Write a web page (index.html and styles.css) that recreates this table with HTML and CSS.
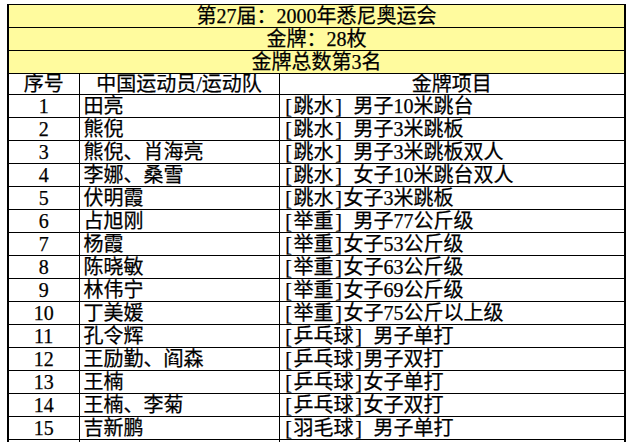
FILE: index.html
```html
<!DOCTYPE html>
<html lang="zh-CN">
<head>
<meta charset="utf-8">
<title>第27届：2000年悉尼奥运会</title>
<link rel="stylesheet" href="styles.css">
</head>
<body>
<table class="medals">
  <colgroup>
    <col class="c-no">
    <col class="c-name">
    <col class="c-event">
  </colgroup>
  <tbody>
    <tr class="title"><td colspan="3">第27届：2000年悉尼奥运会</td></tr>
    <tr class="title"><td colspan="3">金牌：28枚</td></tr>
    <tr class="title"><td colspan="3">金牌总数第3名</td></tr>
    <tr class="head"><td>序号</td><td>中国运动员/运动队</td><td>金牌项目</td></tr>
    <tr><td class="no">1</td><td class="txt">田亮</td><td class="txt"><span class="br">[</span>跳水<span class="br">]</span>&ensp;男子10米跳台</td></tr>
    <tr><td class="no">2</td><td class="txt">熊倪</td><td class="txt"><span class="br">[</span>跳水<span class="br">]</span>&ensp;男子3米跳板</td></tr>
    <tr><td class="no">3</td><td class="txt">熊倪、肖海亮</td><td class="txt"><span class="br">[</span>跳水<span class="br">]</span>&ensp;男子3米跳板双人</td></tr>
    <tr><td class="no">4</td><td class="txt">李娜、桑雪</td><td class="txt"><span class="br">[</span>跳水<span class="br">]</span>&ensp;女子10米跳台双人</td></tr>
    <tr><td class="no">5</td><td class="txt">伏明霞</td><td class="txt"><span class="br">[</span>跳水<span class="br">]</span>女子3米跳板</td></tr>
    <tr><td class="no">6</td><td class="txt">占旭刚</td><td class="txt"><span class="br">[</span>举重<span class="br">]</span>&ensp;男子77公斤级</td></tr>
    <tr><td class="no">7</td><td class="txt">杨霞</td><td class="txt"><span class="br">[</span>举重<span class="br">]</span>女子53公斤级</td></tr>
    <tr><td class="no">8</td><td class="txt">陈晓敏</td><td class="txt"><span class="br">[</span>举重<span class="br">]</span>女子63公斤级</td></tr>
    <tr><td class="no">9</td><td class="txt">林伟宁</td><td class="txt"><span class="br">[</span>举重<span class="br">]</span>女子69公斤级</td></tr>
    <tr><td class="no">10</td><td class="txt">丁美媛</td><td class="txt"><span class="br">[</span>举重<span class="br">]</span>女子75公斤以上级</td></tr>
    <tr><td class="no">11</td><td class="txt">孔令辉</td><td class="txt"><span class="br">[</span>乒乓球<span class="br">]</span>&ensp;男子单打</td></tr>
    <tr><td class="no">12</td><td class="txt">王励勤、阎森</td><td class="txt"><span class="br">[</span>乒乓球<span class="br">]</span>男子双打</td></tr>
    <tr><td class="no">13</td><td class="txt">王楠</td><td class="txt"><span class="br">[</span>乒乓球<span class="br">]</span>女子单打</td></tr>
    <tr><td class="no">14</td><td class="txt">王楠、李菊</td><td class="txt"><span class="br">[</span>乒乓球<span class="br">]</span>女子双打</td></tr>
    <tr><td class="no">15</td><td class="txt">吉新鹏</td><td class="txt"><span class="br">[</span>羽毛球<span class="br">]</span>&ensp;男子单打</td></tr>
    <tr class="more"><td></td><td></td><td></td></tr>
  </tbody>
</table>
</body>
</html>
```
FILE: styles.css
```css
html, body {
  margin: 0;
  padding: 0;
  background: #ffffff;
  overflow: hidden;
}
body {
  padding: 4px 0 0 7px;
  font-family: "Liberation Serif", "Noto Sans CJK SC", serif;
  font-size: 20px;
  color: #000000;
  -webkit-text-stroke: 0.25px #000;
}
.medals {
  border-collapse: collapse;
  table-layout: fixed;
  width: 617px;
  border-left: 2px solid #000;
  border-right: 2px solid #000;
}
.c-no { width: 71px; }
.c-name { width: 200px; }
.c-event { width: 346px; }
.medals td {
  border: 1px solid #000;
  padding: 0;
  height: 22px;
  line-height: 20px;
  white-space: nowrap;
  overflow: hidden;
  vertical-align: middle;
}
.medals tr:first-child td { border-left: 2px solid #000; border-right: 2px solid #000; }
.title td {
  background: #fffb9e;
  text-align: center;
}
.head td {
  height: 20px;
  text-align: center;
}
.no { text-align: center; }
.medals td.txt { padding-left: 4px; }
.br {
  display: inline-block;
  width: 0.5em;
  text-align: center;
}
```
